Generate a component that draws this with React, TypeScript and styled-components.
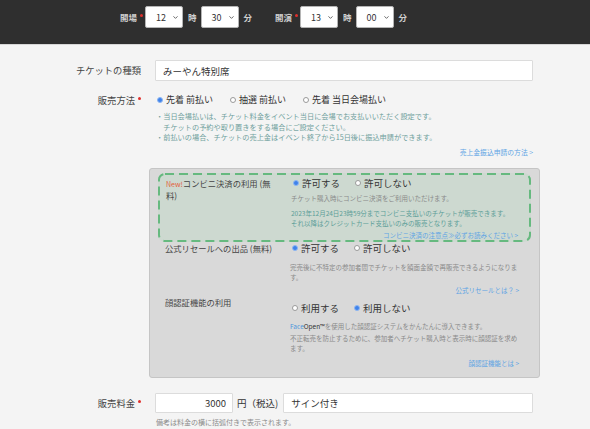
import styled, { createGlobalStyle } from 'styled-components';
import { ChevronDown } from 'lucide-react';

const GlobalStyle = createGlobalStyle`
  * { box-sizing: border-box; }
  html, body {
    margin: 0;
    background: #f4f4f4;
    font-family: "Noto Sans CJK JP", "Noto Sans", sans-serif;
    color: #333;
  }
`;

type RadioOption = { label: string; checked?: boolean };

function Radios({ options, $size = 'md' }: { options: RadioOption[]; $size?: 'sm' | 'md' }) {
  return (
    <RadioGroup $size={$size}>
      {options.map((o) => (
        <RadioItem key={o.label}>
          <RadioMark $checked={!!o.checked} />
          {o.label}
        </RadioItem>
      ))}
    </RadioGroup>
  );
}

function Select({ value }: { value: string }) {
  return (
    <SelectBox>
      <span>{value}</span>
      <ChevronDown size={7} strokeWidth={3} color="#555" />
    </SelectBox>
  );
}

export default function App() {
  return (
    <>
      <GlobalStyle />
      <TopBar>
        <BarLabel>開場<Required /></BarLabel>
        <Select value="12" />
        <BarUnit>時</BarUnit>
        <Select value="30" />
        <BarUnit>分</BarUnit>
        <BarLabel $gap>開演<Required /></BarLabel>
        <Select value="13" />
        <BarUnit>時</BarUnit>
        <Select value="00" />
        <BarUnit>分</BarUnit>
      </TopBar>

      <Form>
        <FormRow>
          <Label $lh={21}>チケットの種類</Label>
          <TextInput readOnly defaultValue="みーやん特別席" />
        </FormRow>

        <FormRow $mt={12}>
          <Label $lh={14}>販売方法<Required /></Label>
          <div>
            <Radios
              $size="sm"
              options={[
                { label: '先着 前払い', checked: true },
                { label: '抽選 前払い' },
                { label: '先着 当日会場払い' },
              ]}
            />
            <Notes>
              <Note>
                <Bullet>・</Bullet>
                <span>
                  当日会場払いは、チケット料金をイベント当日に会場でお支払いいただく設定です。
                  <br />
                  チケットの予約や取り置きをする場合にご設定ください。
                </span>
              </Note>
              <Note>
                <Bullet>・</Bullet>
                <span>前払いの場合、チケットの売上金はイベント終了から15日後に振込申請ができます。</span>
              </Note>
            </Notes>
            <MoreLink $mt={4}>売上金振込申請の方法 &gt;</MoreLink>

            <Panel>
              <Highlight>
                <DashFrame aria-hidden>
                  <rect x="1" y="1" rx="6" ry="6" />
                </DashFrame>
                <PanelRow>
                  <PanelLabel><NewBadge>New!</NewBadge>コンビニ決済の利用 (無料)</PanelLabel>
                  <div>
                    <Radios options={[{ label: '許可する', checked: true }, { label: '許可しない' }]} />
                    <Desc $mt={4}>チケット購入時にコンビニ決済をご利用いただけます。</Desc>
                    <Desc $mt={5} $tone="teal">
                      2023年12月24日23時59分までコンビニ支払いのチケットが販売できます。
                      <br />
                      それ以降はクレジットカード支払いのみの販売となります。
                    </Desc>
                    <MoreLink $mt={2} $small>コンビニ決済の注意点≫必ずお読みください &gt;</MoreLink>
                  </div>
                </PanelRow>
              </Highlight>

              <PanelRow $plain $mt={1}>
                <PanelLabel>公式リセールへの出品 (無料)</PanelLabel>
                <div>
                  <Radios options={[{ label: '許可する', checked: true }, { label: '許可しない' }]} />
                  <Desc $mt={8}>完売後に不特定の参加者間でチケットを額面金額で再販売できるようになります。</Desc>
                  <MoreLink $mt={3} $small>公式リセールとは？ &gt;</MoreLink>
                </div>
              </PanelRow>

              <PanelRow $plain $mt={2}>
                <PanelLabel>顔認証機能の利用</PanelLabel>
                <div>
                  <RadioOffset>
                    <Radios options={[{ label: '利用する' }, { label: '利用しない', checked: true }]} />
                  </RadioOffset>
                  <Desc $mt={7}><FaceBrand>Face</FaceBrand><FaceOpen>Open™</FaceOpen>を使用した顔認証システムをかんたんに導入できます。</Desc>
                  <Desc $mt={2}>不正転売を防止するために、参加者へチケット購入時と表示時に顔認証を求めます。</Desc>
                  <MoreLink $mt={5} $small>顔認証機能とは &gt;</MoreLink>
                </div>
              </PanelRow>
            </Panel>
          </div>
        </FormRow>

        <FormRow $mt={15}>
          <Label $lh={20}>販売料金<Required /></Label>
          <div>
            <PriceLine>
              <PriceInput readOnly defaultValue="3000" />
              <Unit>円（税込)</Unit>
              <TextInput readOnly defaultValue="サイン付き" $h={20} />
            </PriceLine>
            <Hint>備考は料金の横に括弧付きで表示されます。</Hint>
          </div>
        </FormRow>
      </Form>
    </>
  );
}

const TopBar = styled.header`
  display: flex;
  align-items: flex-start;
  height: 45px;
  padding: 6px 0 0 120px;
  background: #2f2f2f;
  border-bottom: 1px solid #d6d6d6;
`;

const BarLabel = styled.span<{ $gap?: boolean }>`
  display: flex;
  align-items: flex-start;
  height: 22px;
  line-height: 22px;
  margin: 0 2px 0 ${({ $gap }) => ($gap ? '19px' : '0')};
  font-size: 8.5px;
  font-weight: 700;
  color: #cfcfcf;
`;

const BarUnit = styled.span`
  line-height: 22px;
  margin: 0 4px 0 5px;
  font-size: 8.5px;
  font-weight: 700;
  color: #cfcfcf;
`;

const SelectBox = styled.div`
  display: flex;
  align-items: center;
  justify-content: space-between;
  width: 38px;
  height: 22px;
  padding: 0 3px 0 10px;
  background: #fff;
  border: 1px solid #b5b5b5;
  border-radius: 2px;
  font-size: 9px;
  color: #333;
`;

const Required = styled.span`
  display: inline-block;
  width: 3px;
  height: 3px;
  margin: 0 0 0 3px;
  border-radius: 50%;
  background: #e0302c;
  align-self: center;
  vertical-align: 2px;
  position: relative;
  top: -2px;
`;

const Form = styled.main`
  padding: 15px 57px 0 0;
`;

const FormRow = styled.div<{ $mt?: number }>`
  display: grid;
  grid-template-columns: 141px 1fr;
  column-gap: 14px;
  margin-top: ${({ $mt }) => $mt ?? 0}px;
`;

const Label = styled.div<{ $lh: number }>`
  text-align: right;
  font-size: 9.3px;
  line-height: ${({ $lh }) => $lh}px;
  color: #444;
  white-space: nowrap;
`;

const TextInput = styled.input<{ $h?: number }>`
  display: block;
  width: 100%;
  height: ${({ $h }) => $h ?? 21}px;
  padding: 0 7px;
  border: 1px solid #dcdcdc;
  border-radius: 1px;
  background: #fff;
  font-family: inherit;
  font-size: 9.5px;
  color: #333;
  outline: none;
`;

const RadioGroup = styled.div<{ $size: 'sm' | 'md' }>`
  display: flex;
  gap: ${({ $size }) => ($size === 'sm' ? 17 : 15)}px;
  font-size: ${({ $size }) => ($size === 'sm' ? 9 : 9.5)}px;
  line-height: ${({ $size }) => ($size === 'sm' ? 14 : 11)}px;
  color: #333;
  padding-left: 2px;
`;

const RadioItem = styled.span`
  display: inline-flex;
  align-items: center;
  gap: 3px;
  white-space: nowrap;
`;

const RadioMark = styled.span<{ $checked: boolean }>`
  width: 6px;
  height: 6px;
  border-radius: 50%;
  background: ${({ $checked }) => ($checked ? '#3f82ea' : '#fff')};
  border: 1px solid ${({ $checked }) => ($checked ? '#8db6f2' : '#9a9a9a')};
  flex: none;
`;

const Notes = styled.div`
  margin-top: 4px;
  padding-left: 1px;
  font-size: 7.2px;
  line-height: 10.5px;
  color: #6f9f9c;
`;

const Note = styled.div`
  display: flex;
`;

const Bullet = styled.span`
  flex: none;
  width: 1em;
`;

const MoreLink = styled.div<{ $mt?: number; $small?: boolean }>`
  margin-top: ${({ $mt }) => $mt ?? 0}px;
  text-align: right;
  font-size: ${({ $small }) => ($small ? 6.5 : 6.8)}px;
  line-height: 10px;
  color: #5ea4e4;
`;

const Panel = styled.section`
  margin: 11px -7px 0 -6px;
  padding: 4px 8px 9px;
  background: #d9d9d9;
  border: 1px solid #c5c5c5;
  border-radius: 3px;
`;

const Highlight = styled.div`
  position: relative;
  padding: 5px 13px 2px 8px;
  background: #cdd9d0;
  border-radius: 7px;
`;

const DashFrame = styled.svg`
  position: absolute;
  inset: 0;
  width: 100%;
  height: 100%;
  overflow: visible;
  pointer-events: none;

  rect {
    width: calc(100% - 2px);
    height: calc(100% - 2px);
    fill: none;
    stroke: #66b97f;
    stroke-width: 2;
    stroke-dasharray: 9 5;
  }
`;

const PanelRow = styled.div<{ $plain?: boolean; $mt?: number }>`
  display: grid;
  grid-template-columns: 113px 1fr;
  column-gap: 12px;
  margin-top: ${({ $mt }) => $mt ?? 0}px;
  padding: ${({ $plain }) => ($plain ? '0 12px 0 7px' : '0')};
`;

const PanelLabel = styled.div`
  font-size: 8.3px;
  line-height: 11px;
  color: #444;
`;

const NewBadge = styled.span`
  font-size: 7px;
  color: #e2603c;
`;

const RadioOffset = styled.div`
  margin-top: 6px;
`;

const Desc = styled.p<{ $mt?: number; $tone?: 'gray' | 'teal' }>`
  margin: ${({ $mt }) => $mt ?? 0}px 0 0;
  font-size: 6.5px;
  line-height: 10px;
  color: ${({ $tone }) => ($tone === 'teal' ? '#5c9e98' : '#8a8a8a')};
`;

const FaceBrand = styled.span`
  color: #4e96dc;
`;

const FaceOpen = styled.span`
  color: #333;
`;

const PriceLine = styled.div`
  display: flex;
  align-items: center;
`;

const PriceInput = styled.input`
  flex: none;
  width: 78px;
  height: 20px;
  padding: 0 6px;
  border: 1px solid #dcdcdc;
  border-radius: 1px;
  background: #fff;
  font-family: inherit;
  font-size: 9.5px;
  color: #333;
  text-align: right;
  outline: none;
`;

const Unit = styled.span`
  flex: none;
  margin: 0 5px 0 4px;
  font-size: 9.5px;
  color: #333;
`;

const Hint = styled.div`
  margin-top: 4px;
  padding-left: 1px;
  font-size: 7px;
  line-height: 10px;
  color: #8a8a8a;
`;
